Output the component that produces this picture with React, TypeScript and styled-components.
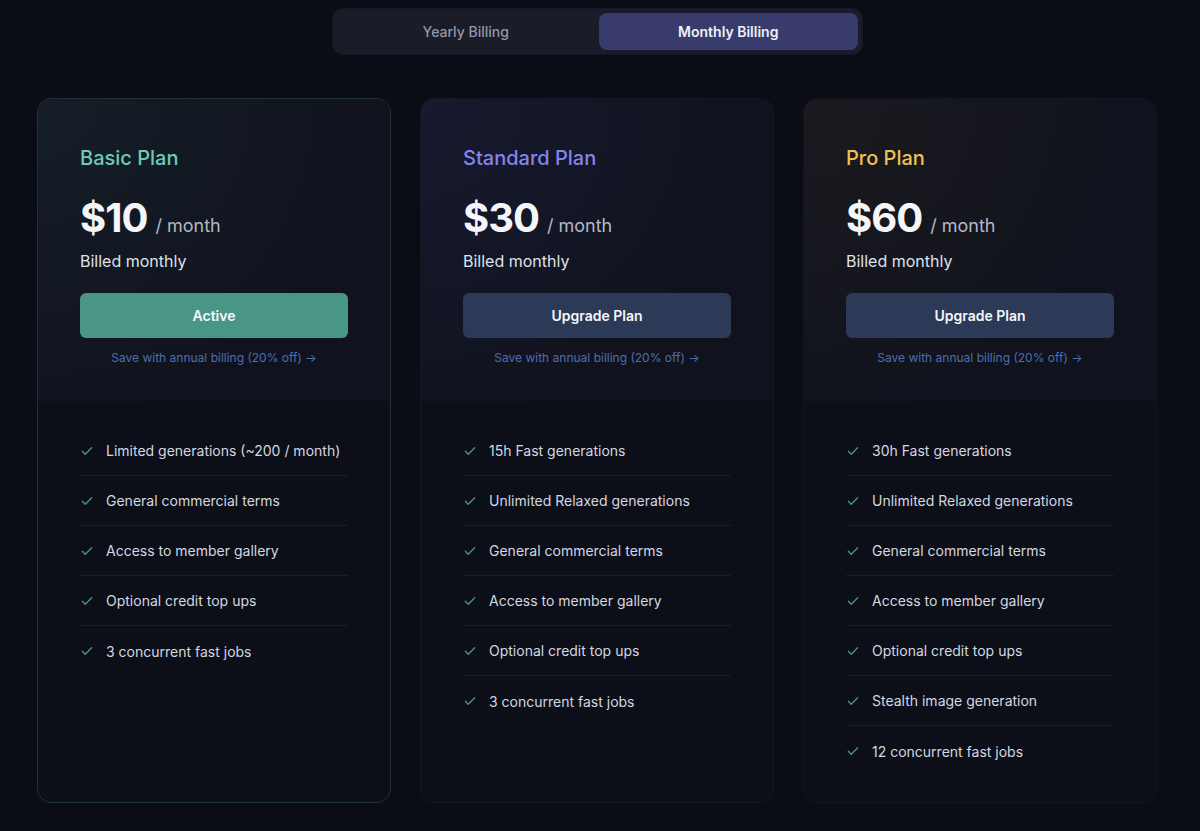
import React, { useState } from 'react';
import styled, { createGlobalStyle } from 'styled-components';

const GlobalStyle = createGlobalStyle`
  body {
    margin: 0;
    background: #0a0d16;
    font-family: Inter, "Noto Sans", sans-serif;
    color: #e4e6ee;
  }
`;

type Accent = 'teal' | 'indigo' | 'amber';

const accents: Record<Accent, { title: string; tint: string; border: string }> = {
  teal: {
    title: '#6ccbb3',
    tint: 'rgba(40, 70, 80, 0.22)',
    border: '#1d3433',
  },
  indigo: {
    title: '#8385ea',
    tint: 'rgba(60, 60, 140, 0.17)',
    border: '#131624',
  },
  amber: {
    title: '#eec14f',
    tint: 'rgba(90, 60, 40, 0.16)',
    border: '#131621',
  },
};

const Page = styled.div`
  min-height: 831px;
  display: flex;
  flex-direction: column;
  align-items: center;
  padding: 8px 6px 0 0;
  box-sizing: border-box;
`;

const Toggle = styled.div`
  display: grid;
  grid-template-columns: 1fr 1fr;
  width: 531px;
  height: 47px;
  padding: 4px;
  box-sizing: border-box;
  background: #1a1c28;
  border: 1px solid #151824;
  border-radius: 11px;
  gap: 4px;
`;

const ToggleButton = styled.button<{ $active: boolean }>`
  border: none;
  border-radius: 8px;
  font-family: inherit;
  font-size: 14px;
  font-weight: ${(p) => (p.$active ? 600 : 500)};
  color: ${(p) => (p.$active ? '#eef0fb' : '#9197a8')};
  background: ${(p) => (p.$active ? '#383b6c' : 'transparent')};
  cursor: pointer;
`;

const Cards = styled.div`
  display: grid;
  grid-template-columns: repeat(3, 354px);
  gap: 29px;
  margin-top: 43px;
`;

const Card = styled.div<{ $accent: Accent }>`
  height: 705px;
  box-sizing: border-box;
  border-radius: 14px;
  border: 1px solid ${(p) => accents[p.$accent].border};
  background: #0c0f18;
  overflow: hidden;
  display: flex;
  flex-direction: column;
`;

const Header = styled.div<{ $accent: Accent }>`
  padding: 47px 42px 35px;
  background:
    radial-gradient(circle at 0% 0%, ${(p) => accents[p.$accent].tint}, transparent 70%),
    #10131d;
  display: flex;
  flex-direction: column;
`;

const PlanName = styled.h2<{ $accent: Accent }>`
  margin: 0;
  font-size: 20px;
  line-height: 24px;
  font-weight: 500;
  color: ${(p) => accents[p.$accent].title};
`;

const PriceRow = styled.div`
  display: flex;
  align-items: baseline;
  gap: 8px;
  margin-top: 23px;
`;

const Price = styled.span`
  font-size: 40px;
  line-height: 50px;
  font-weight: 700;
  color: #f5f6fa;
  letter-spacing: -1px;
`;

const Period = styled.span`
  font-size: 18px;
  color: #b4b8c6;
`;

const Billed = styled.div`
  margin-top: 7px;
  font-size: 16px;
  line-height: 22px;
  color: #dfe2ea;
`;

const ActionButton = styled.button<{ $active: boolean }>`
  margin-top: 21px;
  height: 45px;
  border: none;
  border-radius: 6px;
  font-family: inherit;
  font-size: 14px;
  font-weight: 600;
  color: #f4f6fa;
  background: ${(p) => (p.$active ? '#4a9686' : '#2c3a57')};
  cursor: pointer;
`;

const SaveLink = styled.a`
  margin-top: 12px;
  text-align: center;
  font-size: 12px;
  line-height: 16px;
  color: #4d6db3;
  text-decoration: none;
`;

const Features = styled.ul`
  list-style: none;
  margin: 0;
  padding: 25px 42px;
`;

const Feature = styled.li`
  height: 50px;
  display: flex;
  align-items: center;
  gap: 12px;
  font-size: 14px;
  color: #d4d7e0;
  border-bottom: 1px solid #1a1e2b;
  box-sizing: border-box;

  &:last-child {
    border-bottom: none;
  }
`;

const Check = () => (
  <svg width="14" height="14" viewBox="0 0 24 24" fill="none" stroke="#4d9a73" strokeWidth="2.2" strokeLinecap="round" strokeLinejoin="round">
    <path d="M4 12.5l5 5L20 6.5" />
  </svg>
);

const plans: { name: string; price: string; accent: Accent; active: boolean; features: string[] }[] = [
  {
    name: 'Basic Plan',
    price: '$10',
    accent: 'teal',
    active: true,
    features: [
      'Limited generations (~200 / month)',
      'General commercial terms',
      'Access to member gallery',
      'Optional credit top ups',
      '3 concurrent fast jobs',
    ],
  },
  {
    name: 'Standard Plan',
    price: '$30',
    accent: 'indigo',
    active: false,
    features: [
      '15h Fast generations',
      'Unlimited Relaxed generations',
      'General commercial terms',
      'Access to member gallery',
      'Optional credit top ups',
      '3 concurrent fast jobs',
    ],
  },
  {
    name: 'Pro Plan',
    price: '$60',
    accent: 'amber',
    active: false,
    features: [
      '30h Fast generations',
      'Unlimited Relaxed generations',
      'General commercial terms',
      'Access to member gallery',
      'Optional credit top ups',
      'Stealth image generation',
      '12 concurrent fast jobs',
    ],
  },
];

const App: React.FunctionComponent = () => {
  const [billing, setBilling] = useState<'yearly' | 'monthly'>('monthly');

  return (
    <Page>
      <GlobalStyle />
      <Toggle>
        <ToggleButton $active={billing === 'yearly'} onClick={() => setBilling('yearly')}>
          Yearly Billing
        </ToggleButton>
        <ToggleButton $active={billing === 'monthly'} onClick={() => setBilling('monthly')}>
          Monthly Billing
        </ToggleButton>
      </Toggle>
      <Cards>
        {plans.map((plan) => (
          <Card key={plan.name} $accent={plan.accent}>
            <Header $accent={plan.accent}>
              <PlanName $accent={plan.accent}>{plan.name}</PlanName>
              <PriceRow>
                <Price>{plan.price}</Price>
                <Period>/ month</Period>
              </PriceRow>
              <Billed>Billed monthly</Billed>
              <ActionButton $active={plan.active}>
                {plan.active ? 'Active' : 'Upgrade Plan'}
              </ActionButton>
              <SaveLink href="#">Save with annual billing (20% off) →</SaveLink>
            </Header>
            <Features>
              {plan.features.map((f) => (
                <Feature key={f}>
                  <Check />
                  {f}
                </Feature>
              ))}
            </Features>
          </Card>
        ))}
      </Cards>
    </Page>
  );
};

export default App;
